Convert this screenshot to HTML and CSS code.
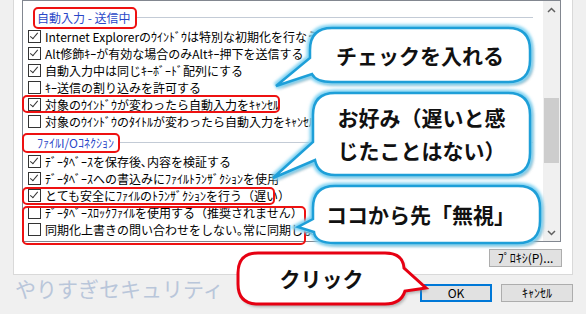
FILE: index.html
```html
<!DOCTYPE html>
<html>
	<head>
		<meta charset="UTF-8">
		<title>自動入力の設定</title>
		<link rel="stylesheet" href="styles.css">
	</head>
	<body>
		<div class="tab">
			<div class="list">
				<div class="items">
					<div class="group">
						<div class="group-head"><span class="group-title">自動入力 - 送信中</span><span class="group-line"></span></div>
						<div class="row"><span class="box on"></span>Internet Explorerのｳｲﾝﾄﾞｳは特別な初期化を行なう</div>
						<div class="row"><span class="box on"></span>Alt修飾ｷｰが有効な場合のみAltｷｰ押下を送信する</div>
						<div class="row"><span class="box on"></span>自動入力中は同じｷｰﾎﾞｰﾄﾞ配列にする</div>
						<div class="row"><span class="box"></span>ｷｰ送信の割り込みを許可する</div>
						<div class="row"><span class="box on"></span>対象のｳｲﾝﾄﾞｳが変わったら自動入力をｷｬﾝｾﾙ</div>
						<div class="row"><span class="box"></span>対象のｳｲﾝﾄﾞｳのﾀｲﾄﾙが変わったら自動入力をｷｬﾝｾﾙ</div>
					</div>
					<div class="group">
						<div class="group-head"><span class="group-title">ﾌｧｲﾙI/Oｺﾈｸｼｮﾝ</span><span class="group-line"></span></div>
						<div class="row"><span class="box on"></span>ﾃﾞｰﾀﾍﾞｰｽを保存後､内容を検証する</div>
						<div class="row"><span class="box on"></span>ﾃﾞｰﾀﾍﾞｰｽへの書込みにﾌｧｲﾙﾄﾗﾝｻﾞｸｼｮﾝを使用</div>
						<div class="row"><span class="box on"></span>とても安全にﾌｧｲﾙのﾄﾗﾝｻﾞｸｼｮﾝを行う（遅い）</div>
						<div class="row"><span class="box"></span>ﾃﾞｰﾀﾍﾞｰｽﾛｯｸﾌｧｲﾙを使用する（推奨されません）</div>
						<div class="row"><span class="box"></span>同期化上書きの問い合わせをしない｡常に同期します</div>
					</div>
				</div>
				<div class="scroll">
					<div class="arrow"><svg width="9" height="6" viewBox="0 0 9 6"><polyline points="1,5 4.5,1.5 8,5"/></svg></div>
					<div class="track"><div class="thumb"></div></div>
					<div class="arrow"><svg width="9" height="6" viewBox="0 0 9 6"><polyline points="1,1 4.5,4.5 8,1"/></svg></div>
				</div>
			</div>
			<div class="tab-foot">
				<button class="btn">ﾌﾟﾛｷｼ(P)...</button>
			</div>
		</div>
		<div class="foot">
			<span class="brand">やりすぎセキュリティ</span>
			<button class="btn btn-ok">OK</button>
			<button class="btn">ｷｬﾝｾﾙ</button>
		</div>

		<!-- 注釈: 赤枠 -->
		<div class="mark mark-1"></div>
		<div class="mark mark-2"></div>
		<div class="mark mark-3"></div>
		<div class="mark mark-4"></div>
		<div class="mark mark-5"></div>

		<!-- 注釈: 吹き出し -->
		<svg class="callouts" width="586" height="314" viewBox="0 0 586 314">
			<defs>
				<filter id="soft" x="-20%" y="-20%" width="140%" height="160%"><feGaussianBlur stdDeviation="1.6"/></filter>
				<path id="b1" d="M332,28 H508 Q530,28 530,50 V60 Q530,82 508,82 H332 Q316,82 312,74 L276,86 L310,58 V50 Q310,28 332,28 Z"/>
				<path id="b2" d="M335,93 H508 Q530,93 530,115 V153 Q530,175 508,175 H335 Q318,175 315,160 L273,178 L313,142 V115 Q313,93 335,93 Z"/>
				<path id="b3" d="M335,186 H518 Q540,186 540,208 V221 Q540,243 518,243 H335 Q315,243 314,232 L298,227 L313,219 V208 Q313,186 335,186 Z"/>
				<path id="b4" d="M258,253 H385 Q403,253 404,268 L426,288 L405,291 Q401,304 385,304 H258 Q238,304 238,284 V273 Q238,253 258,253 Z"/>
			</defs>
			<use href="#b1" class="shadow" transform="translate(3 3)"/>
			<use href="#b1" class="glow"/>
			<use href="#b1" class="face"/>
			<use href="#b2" class="shadow" transform="translate(3 3)"/>
			<use href="#b2" class="glow"/>
			<use href="#b2" class="face"/>
			<use href="#b3" class="shadow" transform="translate(3 3)"/>
			<use href="#b3" class="glow"/>
			<use href="#b3" class="face"/>
			<use href="#b4" class="shadow" transform="translate(2 3)"/>
			<use href="#b4" class="face-red"/>
		</svg>
		<div class="note note-1">チェックを入れる</div>
		<div class="note note-2">お好み（遅いと感<br>じたことはない）</div>
		<div class="note note-3">ココから先「無視」</div>
		<div class="note note-4">クリック</div>
	</body>
</html>
```

FILE: styles.css
```css
body{
	margin: 0;
	width: 586px;
	height: 314px;
	overflow: hidden;
	position: relative;
	background: #f0f0f0;
	font-family: "Noto Sans CJK JP", sans-serif;
	font-size: 12px;
	color: #000;
}

/* タブページ */
.tab{
	margin-left: 13px;
	width: 560px;
	height: 275px;
	box-sizing: border-box;
	border: 1px solid #d9d9d9;
	border-top: 0;
	background: #fff;
	padding-left: 8px;
}
.list{
	width: 539px;
	height: 242px;
	box-sizing: border-box;
	border: 1px solid #828790;
	display: flex;
}
.items{
	flex: 1;
	overflow: hidden;
	padding-left: 5px;
	white-space: nowrap;
}
.group:first-child{
	margin-top: 8px;
}
.group + .group{
	margin-top: 4px;
}
.group-head{
	height: 17px;
	margin-bottom: 2px;
	padding-left: 9px;
	display: flex;
	align-items: center;
}
.group-title{
	color: #2b48c8;
}
.group-line{
	flex: 1;
	height: 1px;
	background: #c3cbd6;
	margin: 0 10px 0 4px;
}
.row{
	height: 17px;
	display: flex;
	align-items: center;
	gap: 4px;
}
.box{
	width: 13px;
	height: 13px;
	box-sizing: border-box;
	border: 1px solid #333;
	background: #fff;
	position: relative;
	flex: none;
}
.box.on::after{
	content: "";
	position: absolute;
	left: 3px;
	top: 0px;
	width: 3px;
	height: 7px;
	border: solid #333;
	border-width: 0 1.5px 1.5px 0;
	transform: rotate(40deg);
}

/* スクロールバー */
.scroll{
	width: 17px;
	background: #f0f0f0;
	display: flex;
	flex-direction: column;
}
.arrow{
	height: 17px;
	display: flex;
	align-items: center;
	justify-content: center;
}
.arrow polyline{
	fill: none;
	stroke: #606060;
	stroke-width: 1.5;
}
.track{
	flex: 1;
	padding: 0 1px;
}
.thumb{
	margin-top: 80px;
	height: 65px;
	background: #cdcdcd;
}

/* ボタン */
.btn{
	width: 73px;
	height: 18px;
	box-sizing: border-box;
	padding: 0;
	border: 1px solid #adadad;
	background: #e1e1e1;
	font-family: "Noto Sans CJK JP", sans-serif;
	font-size: 12px;
	line-height: 14px;
	color: #000;
}
.btn-ok{
	width: 72px;
	border: 2px solid #0078d7;
}
.tab-foot{
	display: flex;
	justify-content: flex-end;
	padding-top: 7px;
	padding-right: 10px;
}
.foot{
	height: 39px;
	display: flex;
	align-items: flex-start;
	gap: 9px;
	padding-right: 13px;
}
.foot .btn{
	width: 72px;
	margin-top: 9px;
}
.brand{
	margin-left: 15px;
	margin-right: auto;
	margin-top: 1px;
	font-size: 21px;
	line-height: 24px;
	color: #b9c6da;
}

/* 赤枠 */
.mark{
	position: absolute;
	box-sizing: border-box;
	border: 2px solid #ee1111;
	border-radius: 5px;
}
.mark-1{ left: 33px; top: 7px; width: 104px; height: 22px; }
.mark-2{ left: 22px; top: 95px; width: 258px; height: 18px; }
.mark-3{ left: 22px; top: 133px; width: 98px; height: 20px; }
.mark-4{ left: 22px; top: 187px; width: 253px; height: 18px; }
.mark-5{ left: 22px; top: 206px; width: 284px; height: 39px; }

/* 吹き出し */
.callouts{
	position: absolute;
	left: 0;
	top: 0;
}
.shadow{
	fill: #7a7a7a;
	opacity: .55;
	filter: url(#soft);
}
.glow{
	fill: none;
	stroke: #7fd2f2;
	stroke-width: 7;
	filter: url(#soft);
}
.face{
	fill: #fff;
	stroke: #1e9fd8;
	stroke-width: 2.5;
}
.face-red{
	fill: #fff;
	stroke: #e60012;
	stroke-width: 3;
}
.note{
	position: absolute;
	display: flex;
	align-items: center;
	justify-content: center;
	text-align: center;
	font-size: 21px;
	font-weight: 700;
	line-height: 33px;
	color: #111;
}
.note-1{ left: 310px; top: 28px; width: 220px; height: 54px; }
.note-2{ left: 313px; top: 93px; width: 217px; height: 82px; }
.note-3{ left: 313px; top: 186px; width: 215px; height: 57px; }
.note-4{ left: 238px; top: 253px; width: 167px; height: 51px; }
```
